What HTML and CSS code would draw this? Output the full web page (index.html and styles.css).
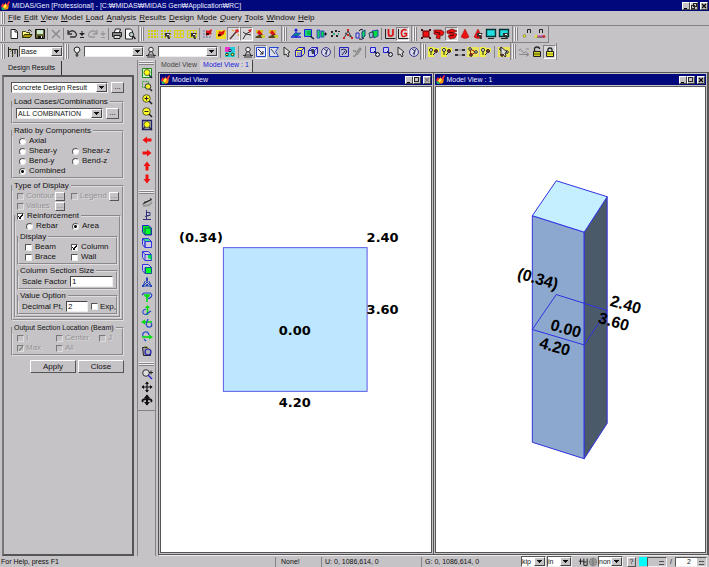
FILE: index.html
```html
<!DOCTYPE html>
<html lang="en">
<head>
<meta charset="utf-8">
<title>MIDAS/Gen</title>
<link rel="stylesheet" href="styles.css">
</head>
<body>
<svg class="defs" aria-hidden="true">
  <symbol id="logo" viewBox="0 0 9 9"><path d="M0 5l2-3 1 2 2-3 0 3 3-4 1 1-2 4-2 3H2z" fill="#f33"/><path d="M2 6l2-3 2 1-2 4z" fill="#ff3"/><path d="M5 6l3-2-1 4-3 1z" fill="#f90"/><path d="M0 6l3 1 1 2H1z" fill="#2a6"/></symbol>
  <symbol id="new" viewBox="0 0 12 12"><path d="M3 1.500h4.500l2 2v7h-6.500z" fill="#fff" stroke="#222"/><path d="M7 1.500v2.500h2.500" fill="none" stroke="#222"/></symbol>
  <symbol id="open" viewBox="0 0 12 12"><path d="M1.500 9.500v-6h3l1 1h3v2" fill="#ff8" stroke="#440"/><path d="M1.500 9.500l2-3h7.500l-2 3z" fill="#a90" stroke="#330"/><path d="M7 2.500q2-2 3.500 1" fill="none" stroke="#222"/></symbol>
  <symbol id="save" viewBox="0 0 12 12"><path d="M1.500 1.500h9v9h-9z" fill="#663" stroke="#111"/><path d="M3 2h6v4H3z" fill="#cec"/><path d="M4 8h5v3H4z" fill="#111"/><path d="M7 8h1v2H7z" fill="#eee"/></symbol>
  <symbol id="cut" viewBox="0 0 12 12"><path d="M2 2l8 8M10 2l-8 8" stroke="#888" stroke-width="1.300"/></symbol>
  <symbol id="undo" viewBox="0 0 12 12"><path d="M2 2v4h4M2 5q4-4 7-1t0 5H4" fill="none" stroke="#333" stroke-width="1.300"/></symbol>
  <symbol id="redo" viewBox="0 0 12 12"><path d="M10 2v4H6M10 5q-4-4-7-1t0 5h5" fill="none" stroke="#999" stroke-width="1.300"/></symbol>
  <symbol id="drop" viewBox="0 0 6 12"><path d="M3 3v3M1 9.500h4" stroke="currentColor"/><path d="M0 5h6l-3 3z" fill="currentColor"/></symbol>
  <symbol id="print" viewBox="0 0 12 12"><path d="M3.500 4l1-3h5l-1 3" fill="#fff" stroke="#222"/><path d="M1.500 4.500h9v4h-9z" fill="#888" stroke="#222"/><path d="M3 7.500h6v3H3z" fill="#ddd" stroke="#222"/></symbol>
  <symbol id="preview" viewBox="0 0 12 12"><path d="M1.500 1h5l2 2v8h-7z" fill="#fff" stroke="#222"/><circle cx="7.500" cy="6.500" r="2.200" fill="#bcc" stroke="#222"/><path d="M9 8l2.500 3" stroke="#222" stroke-width="1.500"/></symbol>
  <symbol id="grid" viewBox="0 0 12 12"><path d="M1 2h2v2H1zM4 2h2v2H4zM7 2h2v2H7zM10 2h1v2h-1zM1 5h2v2H1zM4 5h2v2H4zM7 5h2v2H7zM10 5h1v2h-1zM1 8h2v2H1zM4 8h2v2H4zM7 8h2v2H7zM10 8h1v2h-1z" fill="#d2cc08"/></symbol>
  <symbol id="lines" viewBox="0 0 12 12"><path d="M1.500 2.500h9v7h-9zM1 6h10M4.500 2v8M7.500 2v8" fill="none" stroke="#dcd408"/></symbol>
  <symbol id="cursor" viewBox="0 0 12 12"><path d="M5 5h6l-2 2 1 4H8L7 8 5 9z" fill="#333"/><path d="M7 6h2v1H7z" fill="#fff"/></symbol>
  <symbol id="snap" viewBox="0 0 12 12"><path d="M1 2h2v2H1zM1 5h2v2H1zM1 8h2v2H1zM4 8h2v2H4zM7 8h2v2H7z" fill="#99b"/><path d="M4 2l2 1 4-2-1 4 1 1-4 1-2 1z" fill="#d11"/><path d="M4 5h3v2H4z" fill="#400"/></symbol>
  <symbol id="snapy" viewBox="0 0 12 12"><path d="M1 2h10v9H1z" fill="#ed2"/><path d="M4 3l2 1 4-2-1 4-3 2-3 1z" fill="#d11"/><path d="M3 6h3v2H3z" fill="#400"/></symbol>
  <symbol id="wand" viewBox="0 0 12 12"><path d="M2 11l6-7" stroke="#533" stroke-width="1.300"/><path d="M7 2l3-1 1 3-3 1z" fill="#d22"/><path d="M4 2l2 1M10 6l1 2" stroke="#e90"/></symbol>
  <symbol id="branch" viewBox="0 0 12 12"><path d="M2 11l3-5 5-3M2 4l3 2 5 1" fill="none" stroke="#333"/><path d="M7 2l4-1-2 4z" fill="#c22"/></symbol>
  <symbol id="pick" viewBox="0 0 12 12"><path d="M2 2h7v3H2z" fill="#db2"/><path d="M3 5l2-3 5 6-3 1z" fill="#d11"/><path d="M1 9l6-3 4 4H2z" fill="#542"/><path d="M7 7h4v3H8z" fill="#cc3"/></symbol>
  <symbol id="axis" viewBox="0 0 12 12"><path d="M6 1v9M1 9h10" stroke="#22d" stroke-width="1.300"/><path d="M2 8l3-3h6l-3 3z" fill="#088" stroke="#22d" stroke-width=".6"/><path d="M4 3l2-3 2 3z" fill="#22d"/></symbol>
  <symbol id="greenbox" viewBox="0 0 12 12"><path d="M1.500 1.500h7v7h-7z" fill="#2c8" stroke="#22d"/><path d="M4 3h4v4H4z" fill="#0b4"/><path d="M7 8l4 3" stroke="#123" stroke-width="1.500"/></symbol>
  <symbol id="move" viewBox="0 0 12 12"><path d="M1 2h3v8H1z" fill="#2c6" stroke="#22d" stroke-width=".7"/><path d="M5 3h3v6H5z" fill="#0d4" stroke="#22d" stroke-width=".7"/><path d="M8 6h3M9.500 4.500v3" stroke="#111"/></symbol>
  <symbol id="dots" viewBox="0 0 12 12"><path d="M2 3h2v2H2zM6 2h2v2H6zM9 3h2v1H9zM2 7h2v2H2zM7 7h2v2H7z" fill="#222"/><path d="M4 5h2v2H4zM9 5h1v2H9z" fill="#3a7"/></symbol>
  <symbol id="nodes" viewBox="0 0 12 12"><path d="M2 10l4-7 4 7M3 5l6 4" fill="none" stroke="#333"/><path d="M5 1h2v2H5zM1 9h2v2H1zM9 9h2v2H9zM5 6h2v2H5z" fill="#c22"/></symbol>
  <symbol id="rotate" viewBox="0 0 12 12"><path d="M1 5h3v5H1z" fill="#ccd" stroke="#22b"/><path d="M7 4l3-2v6l-3 2z" fill="#1d6" stroke="#147"/><path d="M4 3q2-3 4-1M4 11q3 1 5-1" stroke="#113" fill="none"/></symbol>
  <symbol id="mirror" viewBox="0 0 12 12"><path d="M4 3l6-1v6l-4 2z" fill="#0d4" stroke="#22b" stroke-width=".8"/><path d="M1 5l4-1v5l-3 1z" fill="#9bd" stroke="#123" stroke-width=".8"/></symbol>
  <symbol id="u" viewBox="0 0 12 12"><path d="M1.500 1v9.500h10" fill="none" stroke="#222"/><path d="M4.500 1v5q0 2 2.200 2T9 6V1" fill="none" stroke="#d11" stroke-width="1.700"/></symbol>
  <symbol id="g" viewBox="0 0 12 12"><path d="M1.500 1v9.500h10" fill="none" stroke="#222"/><path d="M9.500 2.500Q8 1 6 2T4.500 6 7 8.500t2.500-1V5.500H7" fill="none" stroke="#d11" stroke-width="1.500"/></symbol>
  <symbol id="red1" viewBox="0 0 12 12"><path d="M3 3h6v6H3z" fill="#e11" stroke="#600"/><path d="M1 1h2v2H1zM9 1h2v2H9zM1 9h2v2H1zM9 9h2v2H9z" fill="#411"/></symbol>
  <symbol id="red2" viewBox="0 0 12 12"><path d="M1 2h7l3 2-1 3-3 1v3l-4-1 1-3-3-1z" fill="#e11" stroke="#611" stroke-width=".7"/><path d="M2 4l5 1-1 2" stroke="#400" fill="none"/></symbol>
  <symbol id="red3" viewBox="0 0 12 12"><path d="M1 3l5-2 5 2-4 2 4 1-2 4-5 1-2-3 3-1-4-2z" fill="#e11" stroke="#611" stroke-width=".7"/><path d="M3 4l4 1M4 8l4-1" stroke="#400"/></symbol>
  <symbol id="cone" viewBox="0 0 12 12"><path d="M6 1l4 8q-4 3-8 0z" fill="#e11" stroke="#911" stroke-width=".5"/></symbol>
  <symbol id="screen" viewBox="0 0 12 12"><path d="M1.500 1.500h9v7h-9z" fill="#2dd" stroke="#033" stroke-width="1.400"/><path d="M3 10.500h6" stroke="#222"/></symbol>
  <symbol id="node-n" viewBox="0 0 12 12"><path d="M6.500 5V1.500h3V5" fill="none" stroke="#222"/><circle cx="3.500" cy="8" r="1.400" fill="#ee3" stroke="#663" stroke-width=".6"/></symbol>
  <symbol id="elem-n" viewBox="0 0 12 12"><path d="M5.500 5V1.500h3V5M2 9h8" fill="none" stroke="#222"/><path d="M3 8h6" stroke="#d3a"/><circle cx="2" cy="8.500" r="1.400" fill="#dd3"/><circle cx="10" cy="8.500" r="1.400" fill="#c33"/></symbol>
  <symbol id="frame" viewBox="0 0 12 12"><path d="M1.500 1v10M2 3.500h8.500V11M5.500 4v7M8 4v4" stroke="#222" fill="none"/><path d="M3 2l2 2-2 2M5 9h2" stroke="#884" fill="none"/></symbol>
  <symbol id="bulb" viewBox="0 0 12 12"><path d="M3 4q0-3 3-3t3 3L7 7H5z" fill="#eee" stroke="#222"/><path d="M6 7v4M4.500 9h3" stroke="#222"/></symbol>
  <symbol id="tri" viewBox="0 0 12 12"><circle cx="6" cy="3.500" r="2.300" fill="#eee" stroke="#333"/><path d="M5 6l-2 3h6l-2-3M1 9.500h3M8 9.500h3M2 11h8" fill="none" stroke="#333"/></symbol>
  <symbol id="colors" viewBox="0 0 12 12"><path d="M1 1h6v5H1z" fill="#e3c"/><path d="M6 1h5v5H6z" fill="#2cd"/><path d="M1 6h10v5H1z" fill="#2dc"/><circle cx="3" cy="8.500" r="1.300" fill="#ff4" stroke="#224"/><circle cx="8.500" cy="8.500" r="1.300" fill="#ff4" stroke="#224"/><circle cx="6" cy="4.500" r="1.200" fill="#f9f" stroke="#224"/></symbol>
  <symbol id="selbox" viewBox="0 0 12 12"><path d="M1.500 1.500h9v9h-9z" fill="#eef" stroke="#24c"/><path d="M3 3l5 5M8 5v3H5" fill="none" stroke="#222"/></symbol>
  <symbol id="selpoly" viewBox="0 0 12 12"><path d="M1.500 1.500h9l-3 4 3 5h-9z" fill="#dde" stroke="#24c"/><path d="M3 3l4 5" stroke="#345"/></symbol>
  <symbol id="arrow" viewBox="0 0 12 12"><path d="M3 1l6 5-2 1 1 3-1 1-2-3-2 1z" fill="#ddd" stroke="#222" stroke-width=".9"/></symbol>
  <symbol id="selcube" viewBox="0 0 12 12"><path d="M1.500 4.500h6v6h-6zM1.500 4.500l3-3h6l-3 3M10.500 1.500v6l-3 3" fill="#ee5" stroke="#22b"/><path d="M3 6h4v4H3z" fill="#99c"/></symbol>
  <symbol id="cube" viewBox="0 0 12 12"><path d="M1.500 4.500h6v6h-6zM1.500 4.500l3-3h6l-3 3M10.500 1.500v6l-3 3" fill="#cce" stroke="#22b"/><path d="M4 3h3v5H5z" fill="#345"/></symbol>
  <symbol id="ball" viewBox="0 0 12 12"><circle cx="6" cy="6" r="4.400" fill="#dde" stroke="#338"/><path d="M4 3l3 2-1 4M8 3L5 8" fill="none" stroke="#336"/></symbol>
  <symbol id="undosel" viewBox="0 0 12 12"><path d="M1.500 1.500h9v9h-9z" fill="#bbd" stroke="#22b"/><path d="M3 4q3-2 5 0t-1 4M4 9l3-4" fill="none" stroke="#224"/></symbol>
  <symbol id="pen" viewBox="0 0 12 12"><path d="M2 10q3 1 3-3L9 2l1 1-4 6M2 5h3" fill="none" stroke="#888" stroke-width="1.300"/></symbol>
  <symbol id="act" viewBox="0 0 12 12"><path d="M1.500 1.500h5v5h-5z" fill="#ccf" stroke="#22c"/><circle cx="8.500" cy="8.500" r="2" fill="#ddd" stroke="#113"/><path d="M5 5l3 3" stroke="#113"/></symbol>
  <symbol id="ynode" viewBox="0 0 12 12"><path d="M0 1h6v10H0zM5 2h6v4H5z" fill="#ee4"/><circle cx="3" cy="4" r="1.500" fill="#fff" stroke="#222"/><circle cx="8" cy="5" r="1.500" fill="#a33" stroke="#222"/><path d="M3 6v3M7 7L5 9" stroke="#222"/></symbol>
  <symbol id="pair" viewBox="0 0 12 12"><path d="M1 3h3v2H1zM8 3h3v2H8zM1 8h3v2H1zM8 8h3v2H8z" fill="#333"/><path d="M4 4h4M4 9h4" stroke="#888"/></symbol>
  <symbol id="ytri" viewBox="0 0 12 12"><path d="M0 1h12v10H0z" fill="#e9e45c"/><path d="M3 3l6 3-5 3z" fill="none" stroke="#a11"/><circle cx="3" cy="3" r="1.300" fill="#fff" stroke="#222"/><circle cx="9" cy="6" r="1.300" fill="#fff" stroke="#222"/><circle cx="4" cy="9" r="1.300" fill="#d33" stroke="#222"/></symbol>
  <symbol id="wave" viewBox="0 0 12 12"><path d="M1 5q1-4 3 0t4 0M1 8.500h10M8 6.500l3 2-3 2M8 3h3" fill="none" stroke="#888"/></symbol>
  <symbol id="unlock" viewBox="0 0 12 12"><path d="M3.500 6V3q0-2 2.500-2t2.500 2" fill="none" stroke="#222" stroke-width="1.300"/><path d="M2.500 5.500h7v5h-7z" fill="#cc2" stroke="#222"/><path d="M3 8h6" stroke="#551"/></symbol>
  <symbol id="lock" viewBox="0 0 12 12"><path d="M4 6V3.500Q4 2 6 2t2 1.500V6" fill="none" stroke="#222" stroke-width="1.300"/><path d="M2.500 5.500h7v5h-7z" fill="#ee2" stroke="#222"/><path d="M3 8h6" stroke="#882"/></symbol>
  <symbol id="zfit" viewBox="0 0 12 12"><path d="M1.500 1.500h9v9h-9z" fill="#cfc" stroke="#282"/><circle cx="6" cy="5.500" r="3" fill="#ff1" stroke="#663"/><path d="M8 8l3 3" stroke="#224" stroke-width="1.500"/></symbol>
  <symbol id="zwin" viewBox="0 0 12 12"><path d="M1.500 1.500h6v6h-6z" fill="none" stroke="#3a3" stroke-dasharray="2 1"/><circle cx="7" cy="6.500" r="2.800" fill="#ee3" stroke="#333"/><path d="M9 9l2 2" stroke="#222" stroke-width="1.500"/></symbol>
  <symbol id="zin" viewBox="0 0 12 12"><circle cx="5.500" cy="5.500" r="3.800" fill="#ff2" stroke="#553"/><path d="M8 8l3 3" stroke="#222" stroke-width="1.600"/><path d="M3.500 5.500h4M5.500 3.500v4" stroke="#222"/></symbol>
  <symbol id="zout" viewBox="0 0 12 12"><circle cx="5.500" cy="5.500" r="3.800" fill="#ff2" stroke="#553"/><path d="M8 8l3 3" stroke="#222" stroke-width="1.600"/><path d="M3.500 5.500h4" stroke="#222"/></symbol>
  <symbol id="zauto" viewBox="0 0 12 12"><path d="M1.500 1.500h9v9h-9z" fill="#bbb" stroke="#226" stroke-width="1.300"/><circle cx="6" cy="5.500" r="3" fill="#ff1" stroke="#663"/><path d="M2 10l2-2M8 8l3 3" stroke="#224" stroke-width="1.300"/></symbol>
  <symbol id="left" viewBox="0 0 12 12"><path d="M1.500 6L6 2.500V4.500h4.500v3H6v2z" fill="#f01010"/></symbol>
  <symbol id="shade" viewBox="0 0 12 12"><path d="M1 9l3-4 6-3 1 2-6 3z" fill="#333"/><path d="M4 5l5-2" stroke="#ddd"/><path d="M2 10l6-1 3-3" stroke="#999" stroke-width="2" fill="none"/></symbol>
  <symbol id="persp" viewBox="0 0 12 12"><path d="M5.500 1v9M2 10.500h8M6 3.500h3v3H6M4 7.500l4-1" fill="none" stroke="#337"/></symbol>
  <symbol id="vgreen" viewBox="0 0 12 12"><path d="M1.500 1.500h6l3 2.500v7H4l-2.500-3z" fill="#0e2" stroke="#22c"/><path d="M4 4h6v6.500H4z" fill="#0f2" stroke="#157"/></symbol>
  <symbol id="vtop" viewBox="0 0 12 12"><path d="M1.500 1.500v6l2.500 3V4.500M4 4.500h6.500v6H4z" fill="#ccd" stroke="#33d"/><path d="M1.500 1.500h6l3 3H4z" fill="#3d8" stroke="#33d"/></symbol>
  <symbol id="vside" viewBox="0 0 12 12"><path d="M1.500 1.500h6l3 3v6H4l-2.500-3z" fill="#ccd" stroke="#33d"/><path d="M7 4h3.500v6L7 8z" fill="#0d5"/><path d="M4 10.500v-6h6M2 2l2 2.500" fill="none" stroke="#33d"/></symbol>
  <symbol id="vfront" viewBox="0 0 12 12"><path d="M1.500 1.500h6l3 3H4v6l-2.500-3z" fill="#ccd" stroke="#33d"/><path d="M4.500 4.500h6v6h-6z" fill="#0f2" stroke="#159"/></symbol>
  <symbol id="iso" viewBox="0 0 12 12"><path d="M6 1v5l-4 4M6 6l4 4M4 5l-2 5h8L8 5" fill="none" stroke="#24b"/><path d="M5 2h2v3H5zM1 9h2v2H1zM9 9h2v2H9zM5 8h2v2H5z" fill="#24b"/></symbol>
  <symbol id="spin-l" viewBox="0 0 12 12"><path d="M6 11V4M3 4h6" stroke="#0d1" stroke-width="1.600"/><path d="M3.500 6L6 3l2.500 3z" fill="#0d1"/><path d="M1 4l2-2h6q3 2 1 4T7 7" fill="none" stroke="#24c" stroke-width="1.200"/></symbol>
  <symbol id="spin-r" viewBox="0 0 12 12"><path d="M6.500 11V2" stroke="#0d1" stroke-width="1.600"/><path d="M4 4l2.500-3L9 4z" fill="#0d1"/><path d="M5 5q-4 1-3 4 2 3 5 0l3-2" fill="none" stroke="#24c" stroke-width="1.200"/></symbol>
  <symbol id="spin-u" viewBox="0 0 12 12"><path d="M11 5H2" stroke="#0d1" stroke-width="1.600"/><path d="M4 2.500L0 5l4 2.500z" fill="#0d1"/><path d="M7 2L5 7q1 4 4 3t1-4" fill="none" stroke="#24c" stroke-width="1.200"/></symbol>
  <symbol id="spin-d" viewBox="0 0 12 12"><path d="M1 7h8" stroke="#0d1" stroke-width="1.600"/><path d="M8 4.500L12 7 8 9.500z" fill="#0d1"/><path d="M2 6q-1-3 2-4t4 3M3 9l2 2" fill="none" stroke="#24c" stroke-width="1.200"/></symbol>
  <symbol id="reset" viewBox="0 0 12 12"><path d="M1.500 2.500h5l3 3v5h-7z" fill="#99a" stroke="#223"/><circle cx="7" cy="7" r="3" fill="#aab" stroke="#22a" stroke-width="1.200"/><path d="M3 2q3-2 5 2" stroke="#882" fill="none"/></symbol>
  <symbol id="dynzoom" viewBox="0 0 12 12"><circle cx="5" cy="5" r="3.300" fill="#ddd" stroke="#333"/><path d="M7 7l4 4" stroke="#22c" stroke-width="1.500"/><path d="M8 4.500h4M10 2.500v4" stroke="#222"/></symbol>
  <symbol id="pan" viewBox="0 0 12 12"><path d="M6 1v10M1 6h10" stroke="#111" stroke-width="1.200"/><path d="M4 3l2-2.500L8 3zM4 9l2 2.500L8 9zM3 4L.5 6 3 8zM9 4l2.500 2L9 8z" fill="#111"/></symbol>
  <symbol id="orbit" viewBox="0 0 12 12"><path d="M6 1v10" stroke="#111" stroke-width="2"/><path d="M3 4l3-3.500L9 4zM3 8l3 3.500L9 8z" fill="#111"/><path d="M2 8q-2-3 4-3t4 3" fill="none" stroke="#111" stroke-width="1.800"/></symbol>
  <symbol id="globe" viewBox="0 0 12 12"><circle cx="6" cy="6" r="4.500" fill="#aaa" stroke="#888"/><path d="M1 6h10M6 1v10M3 3q3 2 6 0M3 9q3-2 6 0" fill="none" stroke="#777"/></symbol>
  <symbol id="fit" viewBox="0 0 12 12"><path d="M1 5h5M3 2v7M7 2v8h4V2M6 6h4" fill="none" stroke="#222" stroke-width="1.200"/></symbol>
  <symbol id="x" viewBox="0 0 6 6"><path d="M1 1l4 4M5 1L1 5" stroke="currentColor" stroke-width="1.300"/></symbol>
</svg>

<header class="titlebar">
  <svg class="logo"><use href="#logo"/></svg>
  <h1>MIDAS/Gen [Professional] - [C:₩MIDAS₩MIDAS Gen₩Application₩RC]</h1>
  <div class="winbtns"><button class="wb min" aria-label="Minimize"></button><button class="wb restore" aria-label="Restore"></button><button class="wb close" aria-label="Close"><svg><use href="#x"/></svg></button></div>
</header>

<nav class="menubar">
  <i class="grip"></i>
  <a href="#"><u>F</u>ile</a><a href="#"><u>E</u>dit</a><a href="#"><u>V</u>iew</a><a href="#"><u>M</u>odel</a><a href="#"><u>L</u>oad</a><a href="#"><u>A</u>nalysis</a><a href="#"><u>R</u>esults</a><a href="#"><u>D</u>esign</a><a href="#">M<u>o</u>de</a><a href="#"><u>Q</u>uery</a><a href="#"><u>T</u>ools</a><a href="#"><u>W</u>indow</a><a href="#"><u>H</u>elp</a>
</nav>

<div class="bars bars-main">
  <div class="band"><i class="grip"></i>
    <button class="tb" aria-label="New"><svg><use href="#new"/></svg></button><button class="tb" aria-label="Open"><svg><use href="#open"/></svg></button><button class="tb" aria-label="Save"><svg><use href="#save"/></svg></button><i class="sep"></i><button class="tb" aria-label="Cut"><svg><use href="#cut"/></svg></button><i class="sep"></i><button class="tb" aria-label="Undo"><svg><use href="#undo"/></svg></button><button class="tb slim" aria-label="Undo list"><svg><use href="#drop"/></svg></button><button class="tb" aria-label="Redo"><svg><use href="#redo"/></svg></button><button class="tb slim off" aria-label="Redo list"><svg><use href="#drop"/></svg></button><i class="sep"></i><button class="tb" aria-label="Print"><svg><use href="#print"/></svg></button><button class="tb" aria-label="Preview"><svg><use href="#preview"/></svg></button>
  </div>
  <div class="band"><i class="grip"></i>
    <button class="tb" aria-label="Point grid"><svg><use href="#grid"/></svg></button><button class="tb" aria-label="Set point grid"><svg><use href="#grid"/><use href="#cursor"/></svg></button><button class="tb" aria-label="Line grid"><svg><use href="#lines"/></svg></button><button class="tb" aria-label="Set line grid"><svg><use href="#lines"/><use href="#cursor"/></svg></button><i class="sep"></i><button class="tb" aria-label="Point snap"><svg><use href="#snap"/></svg></button><button class="tb" aria-label="Line snap"><svg><use href="#snapy"/></svg></button><button class="tb on" aria-label="Node snap"><svg><use href="#wand"/></svg></button><button class="tb on" aria-label="Element snap"><svg><use href="#branch"/></svg></button><button class="tb" aria-label="Snap all"><svg><use href="#pick"/></svg></button><button class="tb" aria-label="Snap free"><svg><use href="#pick"/></svg></button>
  </div>
  <div class="band"><i class="grip"></i>
    <button class="tb" aria-label="UCS"><svg><use href="#axis"/></svg></button><button class="tb" aria-label="Named plane"><svg><use href="#greenbox"/></svg></button><button class="tb" aria-label="Translate"><svg><use href="#move"/></svg></button><button class="tb" aria-label="Create nodes"><svg><use href="#dots"/></svg></button><button class="tb" aria-label="Create elements"><svg><use href="#nodes"/></svg></button><button class="tb" aria-label="Rotate"><svg><use href="#rotate"/></svg></button><button class="tb" aria-label="Mirror"><svg><use href="#mirror"/></svg></button><i class="sep"></i><button class="tb" aria-label="User coordinates"><svg><use href="#u"/></svg></button><button class="tb on" aria-label="Global coordinates"><svg><use href="#g"/></svg></button>
  </div>
  <div class="band"><i class="grip"></i>
    <button class="tb" aria-label="Shrink"><svg><use href="#red1"/></svg></button><button class="tb" aria-label="Perspective"><svg><use href="#red2"/></svg></button><button class="tb on" aria-label="Hidden"><svg><use href="#red3"/></svg></button><button class="tb" aria-label="Render"><svg><use href="#cone"/></svg></button><button class="tb" aria-label="Render option"><svg><use href="#cone"/><use href="#cursor"/></svg></button><button class="tb" aria-label="Display"><svg><use href="#screen"/></svg></button><button class="tb" aria-label="Display option"><svg><use href="#screen"/><use href="#cursor"/></svg></button>
  </div>
  <div class="band"><i class="grip"></i>
    <button class="tb" aria-label="Node number"><svg><use href="#node-n"/></svg></button><button class="tb" aria-label="Element number"><svg><use href="#elem-n"/></svg></button>
  </div>
</div>

<div class="bars bars-select">
  <div class="band"><i class="grip"></i>
    <button class="tb" aria-label="Stage"><svg><use href="#frame"/></svg></button><span class="combo stage"><select aria-label="Construction stage"><option>Base</option></select></span>
  </div>
  <div class="band"><i class="grip"></i>
    <button class="tb wide" aria-label="Select nodes"><svg><use href="#bulb"/></svg></button><span class="combo pick"><select aria-label="Node list"><option></option></select></span><button class="tb wide" aria-label="Select elements"><svg><use href="#tri"/></svg></button><span class="combo pick"><select aria-label="Element list"><option></option></select></span><i class="sep"></i><button class="tb" aria-label="Group"><svg><use href="#colors"/></svg></button><i class="sep"></i><button class="tb" aria-label="Select identity"><svg><use href="#tri"/></svg></button><button class="tb on" aria-label="Select window"><svg><use href="#selbox"/></svg></button><button class="tb" aria-label="Select polygon"><svg><use href="#selpoly"/></svg></button><button class="tb" aria-label="Select single"><svg><use href="#arrow"/></svg></button><button class="tb" aria-label="Select plane"><svg><use href="#selcube"/></svg></button><button class="tb" aria-label="Select volume"><svg><use href="#cube"/></svg></button><button class="tb" aria-label="Select all"><svg><use href="#ball"/></svg></button><i class="sep"></i><button class="tb" aria-label="Select previous"><svg><use href="#undosel"/></svg></button><button class="tb" aria-label="Select recent"><svg><use href="#pen"/></svg></button><i class="sep"></i><button class="tb" aria-label="Activate"><svg><use href="#act"/></svg></button><button class="tb" aria-label="Inactivate"><svg><use href="#act"/></svg></button><button class="tb" aria-label="Activate inverse"><svg><use href="#arrow"/></svg></button><button class="tb" aria-label="Activate all"><svg><use href="#ball"/></svg></button>
  </div>
  <div class="band"><i class="grip"></i>
    <button class="tb" aria-label="Query nodes"><svg><use href="#ynode"/></svg></button><button class="tb" aria-label="Query elements"><svg><use href="#ynode"/></svg></button><button class="tb" aria-label="Merge"><svg><use href="#pair"/></svg></button><button class="tb" aria-label="Free edge"><svg><use href="#ytri"/></svg></button><button class="tb" aria-label="Free face"><svg><use href="#ynode"/></svg></button><i class="sep"></i><button class="tb" aria-label="Check"><svg><use href="#ytri"/><use href="#arrow"/></svg></button>
  </div>
  <div class="band"><i class="grip"></i>
    <button class="tb" aria-label="Analysis"><svg><use href="#wave"/></svg></button><button class="tb" aria-label="Preprocessing"><svg><use href="#unlock"/></svg></button><button class="tb on" aria-label="Postprocessing"><svg><use href="#lock"/></svg></button>
  </div>
</div>

<main class="work">
  <aside class="side">
    <div class="side-tab">Design Results</div>
    <form class="panel">
      <div class="row first"><span class="combo grow"><select aria-label="Result type"><option>Concrete Design Result</option></select></span><button type="button" class="btn more">...</button></div>
      <fieldset class="lc"><legend>Load Cases/Combinations</legend>
        <div class="row"><span class="combo grow"><select aria-label="Load combination"><option>ALL COMBINATION</option></select></span><button type="button" class="btn more">...</button></div>
      </fieldset>
      <fieldset class="ratio"><legend>Ratio by Components</legend>
        <label><input type="radio" name="r">Axial</label><span></span>
        <label><input type="radio" name="r">Shear-y</label><label><input type="radio" name="r">Shear-z</label>
        <label><input type="radio" name="r">Bend-y</label><label><input type="radio" name="r">Bend-z</label>
        <label><input type="radio" name="r" checked>Combined</label>
      </fieldset>
      <fieldset class="type"><legend>Type of Display</legend>
        <div class="opts"><label class="dis"><input type="checkbox" disabled>Contour</label><button type="button" class="btn tiny" disabled>...</button><label class="dis"><input type="checkbox" disabled>Legend</label><button type="button" class="btn tiny" disabled>...</button>
        <label class="dis"><input type="checkbox" disabled>Values</label><button type="button" class="btn tiny" disabled>...</button></div>
        <fieldset class="reinf"><legend><label><input type="checkbox" checked>Reinforcement</label></legend>
          <div class="two area"><label><input type="radio" name="a">Rebar</label><label><input type="radio" name="a" checked>Area</label></div>
          <fieldset class="inner"><legend>Display</legend>
            <div class="two"><label><input type="checkbox">Beam</label><label><input type="checkbox" checked>Column</label><label><input type="checkbox">Brace</label><label><input type="checkbox">Wall</label></div>
          </fieldset>
          <fieldset class="inner"><legend>Column Section Size</legend>
            <div class="row"><label for="sf">Scale Factor</label><input id="sf" class="txt grow" type="text" value="1"></div>
          </fieldset>
          <fieldset class="inner"><legend>Value Option</legend>
            <div class="row"><label for="dp">Decimal Pt,</label><input id="dp" class="txt dp" type="text" value="2"><label><input type="checkbox">Exp,</label></div>
          </fieldset>
        </fieldset>
      </fieldset>
      <fieldset class="out"><legend>Output Section Location (Beam)</legend>
        <label class="dis"><input type="checkbox" disabled>I</label><label class="dis"><input type="checkbox" disabled>Center</label><label class="dis"><input type="checkbox" disabled>J</label>
        <label class="dis"><input type="checkbox" disabled checked>Max</label><label class="dis"><input type="checkbox" disabled>All</label>
      </fieldset>
      <div class="actions"><button type="button" class="btn">Apply</button><button type="button" class="btn">Close</button></div>
    </form>
  </aside>

  <div class="vbar">
    <i class="hgrip"></i>
    <button class="tb" aria-label="Zoom fit"><svg><use href="#zfit"/></svg></button><button class="tb" aria-label="Zoom window"><svg><use href="#zwin"/></svg></button><button class="tb" aria-label="Zoom in"><svg><use href="#zin"/></svg></button><button class="tb" aria-label="Zoom out"><svg><use href="#zout"/></svg></button><button class="tb" aria-label="Auto fit"><svg><use href="#zauto"/></svg></button><i class="vsep"></i><button class="tb" aria-label="Pan left"><svg><use href="#left"/></svg></button><button class="tb r180" aria-label="Pan right"><svg><use href="#left"/></svg></button><button class="tb r90" aria-label="Pan up"><svg><use href="#left"/></svg></button><button class="tb r270" aria-label="Pan down"><svg><use href="#left"/></svg></button>
    <i class="hgrip"></i>
    <button class="tb" aria-label="Shade"><svg><use href="#shade"/></svg></button><button class="tb" aria-label="Perspective"><svg><use href="#persp"/></svg></button><i class="vsep"></i><button class="tb" aria-label="Iso view"><svg><use href="#vgreen"/></svg></button><button class="tb" aria-label="Top view"><svg><use href="#vtop"/></svg></button><button class="tb" aria-label="Right view"><svg><use href="#vside"/></svg></button><button class="tb" aria-label="Front view"><svg><use href="#vfront"/></svg></button><button class="tb" aria-label="Angle view"><svg><use href="#iso"/></svg></button><i class="vsep"></i><button class="tb" aria-label="Rotate left"><svg><use href="#spin-l"/></svg></button><button class="tb" aria-label="Rotate right"><svg><use href="#spin-r"/></svg></button><button class="tb" aria-label="Rotate up"><svg><use href="#spin-u"/></svg></button><button class="tb" aria-label="Rotate down"><svg><use href="#spin-d"/></svg></button><i class="vsep"></i><button class="tb" aria-label="Previous view"><svg><use href="#reset"/></svg></button>
    <i class="hgrip"></i>
    <button class="tb" aria-label="Dynamic zoom"><svg><use href="#dynzoom"/></svg></button><button class="tb" aria-label="Dynamic pan"><svg><use href="#pan"/></svg></button><button class="tb" aria-label="Dynamic rotate"><svg><use href="#orbit"/></svg></button>
    <i class="vend"></i>
  </div>

  <section class="mdi">
    <div class="tabs"><a href="#">Model View</a><a href="#" class="active">Model View : 1</a></div>
    <div class="windows">
      <article class="win">
        <header><svg class="logo"><use href="#logo"/></svg><h2>Model View</h2><div class="winbtns"><button class="wb min" aria-label="Minimize"></button><button class="wb max" aria-label="Maximize"></button><button class="wb close dim" aria-label="Close"><svg><use href="#x"/></svg></button></div></header>
        <div class="canvas"><svg viewBox="161 87 270 465">
          <rect x="223.500" y="247.500" width="144" height="144" fill="#bde7ff" stroke="#5a5ae8"/>
          <g class="plan"><text x="179" y="242">(0.34)</text><text x="367" y="242">2.40</text><text x="367" y="314">3.60</text><text x="279" y="335">0.00</text><text x="279" y="407">4.20</text></g>
        </svg></div>
      </article>
      <article class="win">
        <header><svg class="logo"><use href="#logo"/></svg><h2>Model View : 1</h2><div class="winbtns"><button class="wb min" aria-label="Minimize"></button><button class="wb max" aria-label="Maximize"></button><button class="wb close" aria-label="Close"><svg><use href="#x"/></svg></button></div></header>
        <div class="canvas"><svg viewBox="436 87 270 465">
          <g stroke="#3030e0" stroke-linejoin="round">
            <path d="M532.500 215.500l52 16.500v227l-52-16.500z" fill="#8ca8cf"/>
            <path d="M584.500 232l23-35.500v227l-23 35.500z" fill="#4b5a69"/>
            <path d="M556.500 180.500l51 16-23 35.500-52-16.500z" fill="#c5efff"/>
            <path d="M556.500 294.500l51 16-23 34.500-52-15.500z" fill="none"/>
          </g>
          <g class="iso"><text transform="translate(538 279) rotate(16)" y="5">(0.34)</text><text transform="translate(626 305) rotate(16)" y="5">2.40</text><text transform="translate(614 322) rotate(16)" y="5">3.60</text><text transform="translate(566 329) rotate(16)" y="5">0.00</text><text transform="translate(555 347) rotate(16)" y="5">4.20</text></g>
        </svg></div>
      </article>
    </div>
  </section>
</main>

<footer class="status">
  <span class="help">For Help, press F1</span><span class="pane none">None!</span><span class="pane coord">U: 0, 1086,614, 0</span><span class="pane coord">G: 0, 1086,614, 0</span>
  <span class="combo unit"><select aria-label="Force unit"><option>kip</option></select></span><span class="combo unit"><select aria-label="Length unit"><option>in</option></select></span>
  <svg class="st-ic gap"><use href="#fit"/></svg><svg class="st-ic"><use href="#globe"/></svg>
  <span class="combo unit"><select aria-label="Filter"><option>non</option></select></span>
  <button class="btn q">?</button><i class="swatch"></i><span class="spinbox"></span><span class="slash">/</span><span class="spinbox num">2</span>
</footer>
</body>
</html>
```
FILE: styles.css
```css
* { box-sizing: border-box; }
:root {
  --face: #c6c3c6;
  --dark: #848284;
  --navy: #00087c;
}
html, body { margin: 0; }
body {
  min-height: 100vh;
  display: flex;
  flex-direction: column;
  background: var(--face);
  color: #111;
  font: 8px/10px "Liberation Sans", "Noto Sans CJK KR", sans-serif;
  overflow: hidden;
}
button, input, select { font: inherit; color: inherit; margin: 0; padding: 0; border-radius: 0; }
button { border: 0; background: none; }
h1, h2 { margin: 0; font: inherit; flex: 1; white-space: nowrap; }
a { color: inherit; text-decoration: none; }
.defs { display: none; }

.titlebar, .win header {
  display: flex;
  align-items: center;
  gap: 2px;
  height: 11px;
  padding: 0 1px;
  background: var(--navy);
  color: #eef;
  font-size: 7px;
}
.logo { width: 9px; height: 9px; }
.winbtns { display: flex; }
.wb {
  position: relative;
  width: 8px;
  height: 8px;
  background: var(--face);
  border: 1px solid;
  border-color: #fff #444 #444 #fff;
  color: #000;
}
.wb svg { display: block; width: 6px; height: 6px; }
.wb.close { margin-left: 2px; }
.wb.dim { color: #777; }
.wb.min::after { content: ""; position: absolute; left: 1px; bottom: 0; width: 3px; height: 1px; background: #000; }
.wb.max::after, .wb.restore::after { content: ""; position: absolute; inset: 0 1px 1px 0; border: 1px solid #222; }
.wb.restore::after { inset: 2px 2px 0 0; }
.wb.restore::before { content: ""; position: absolute; inset: 0 0 2px 2px; border: 1px solid #222; }

.menubar {
  display: flex;
  align-items: center;
  gap: 3px;
  height: 15px;
  border-bottom: 1px solid var(--dark);
}
.grip {
  flex: none;
  width: 5px;
  align-self: stretch;
  margin: 1px 1px 1px 0;
  background: linear-gradient(90deg, transparent 1px, #eee 1px 2px, var(--dark) 2px 3px, #eee 3px 4px, var(--dark) 4px);
}
.menubar .grip { margin-right: 0; }

.bars { display: flex; height: 17px; }
.band {
  display: flex;
  align-items: center;
  border-right: 1px solid var(--dark);
  border-bottom: 1px solid var(--dark);
}
.bars-main .band { padding-right: 2px; }
.bars-main .grip { margin-right: 2px; }
.bars-select .band { border-bottom: 0; }
.tb { flex: none; display: grid; place-items: center; width: 13px; height: 14px; }
.tb svg { width: 12px; height: 12px; }
.tb.slim { width: 8px; color: #222; }
.tb.slim svg { width: 6px; }
.tb.off { color: #999; }
.tb.wide { width: 14px; }
.tb.on { background: #d9d7d9; border: 1px solid; border-color: var(--dark) #fff #fff var(--dark); }
.sep { flex: none; width: 1px; height: 12px; margin: 0 1px; background: var(--dark); }
.bars-select .sep { margin: 0 2px; }

.combo {
  position: relative;
  display: flex;
  height: 11px;
  background: #fff;
  border: 1px solid;
  border-color: #555 #eee #eee #555;
  font-size: 7px;
}
.combo select { flex: 1; min-width: 0; appearance: none; border: 0; background: none; padding: 0 9px 0 1px; line-height: 9px; }
.combo::after {
  content: "";
  position: absolute;
  top: 0;
  right: 0;
  bottom: 0;
  width: 9px;
  border: 1px solid;
  border-color: #fff #444 #444 #fff;
  background: linear-gradient(#111, #111) center 2px / 5px 1px no-repeat, linear-gradient(#111, #111) center 3px / 3px 1px no-repeat, linear-gradient(#111, #111) center 4px / 1px 1px no-repeat, var(--face);
  pointer-events: none;
}
.stage { width: 44px; }
.pick { width: 60px; }

.work { flex: 1; display: flex; min-height: 0; }
.side { width: 134px; display: flex; flex-direction: column; padding: 1px 0 0 2px; }
.side-tab {
  align-self: flex-start;
  height: 14px;
  padding: 2px 6px;
  font-size: 7px;
  border-right: 1px solid #333;
}
.panel {
  flex: 1;
  padding: 5px 8px 0 7px;
  border: 2px solid;
  border-color: #555 #555 #555 #777;
}
.row { display: flex; align-items: center; }
.grow { flex: 1; min-width: 0; }
.btn {
  background: var(--face);
  border: 1px solid;
  border-color: #fff #555 #555 #fff;
  line-height: 8px;
}
.more { width: 13px; height: 11px; margin-left: 3px; padding-bottom: 2px; }
.tiny { width: 10px; height: 9px; line-height: 6px; }
.btn:disabled { color: #777; }
fieldset {
  --in: 4px;
  min-width: 0;
  margin: 2px 0 0;
  padding: 0 var(--in) 1px;
  border: 2px groove #dedcde;
}
legend { height: 10px; margin-left: calc(-1px - var(--in)); padding: 0 2px; white-space: nowrap; }
.lc { --in: 3px; margin-top: 4px; padding-top: 1px; padding-bottom: 3px; }
.ratio, .two { display: grid; grid-template-columns: 53px 1fr; }
.ratio { --in: 6px; }
.two { grid-template-columns: 46px 1fr; }
label { display: flex; align-items: center; gap: 3px; height: 10px; white-space: nowrap; }
input[type=radio], input[type=checkbox] {
  flex: none;
  appearance: none;
  width: 7px;
  height: 7px;
  background: #fff;
  border: 1px solid;
  border-color: #555 #eee #eee #555;
}
input[type=radio] { border-radius: 50%; }
input[type=radio]:checked { background: radial-gradient(circle, #111 1px, #fff 2px); }
input[type=checkbox]:checked { background: linear-gradient(45deg, transparent 35%, #111 35% 65%, transparent 65%) 0 2px / 3px 3px no-repeat, linear-gradient(-45deg, transparent 40%, #111 40% 65%, transparent 65%) right 0 / 4px 5px no-repeat, #fff; }
input:disabled { background: var(--face); border-color: #777 #ddd #ddd #777; }
input[type=checkbox]:checked:disabled { background: linear-gradient(-45deg, transparent 40%, #888 40% 65%, transparent 65%) center / 4px 5px no-repeat; }
.dis { gap: 2px; color: #949294; text-shadow: 1px 1px #dcdadc; }
.type { --in: 1px; }
.opts { display: grid; grid-template-columns: 38px 16px 38px 1fr; align-items: center; padding-left: 3px; }
.reinf { --in: 1px; margin-top: 0; }
.area { padding-left: 9px; }
.inner { --in: 3px; margin-top: 1px; }
.inner .two { padding-left: 3px; }
.txt { height: 11px; border: 1px solid; border-color: #444 #eee #eee #444; background: #fff; padding: 0 1px; min-width: 0; }
.inner .row { gap: 3px; }
.inner .row label { gap: 2px; }
.dp { flex: none; width: 22px; }
.out { display: grid; grid-template-columns: 39px 43px 1fr; }
.out legend { font-size: 7px; }
.actions { display: flex; justify-content: flex-end; gap: 2px; margin-top: 4px; }
.actions .btn { width: 46px; height: 13px; }

.vbar {
  width: 19px;
  margin-left: 3px;
  border-left: 1px solid var(--dark);
  border-right: 1px solid var(--dark);
  display: flex;
  flex-direction: column;
  align-items: center;
}
.vbar .tb { height: 13px; }
.hgrip {
  flex: none;
  align-self: stretch;
  height: 5px;
  margin: 1px 1px 0;
  background: linear-gradient(#eee 1px, var(--dark) 1px 2px, #eee 2px 3px, var(--dark) 3px 4px, transparent 4px);
}
.tb + .hgrip { margin-top: 5px; }
.vsep { flex: none; height: 2px; }
.vend { align-self: stretch; height: 5px; border-bottom: 1px solid var(--dark); }
.r90 svg { transform: rotate(90deg); }
.r180 svg { transform: rotate(180deg); }
.r270 svg { transform: rotate(270deg); }

.mdi { flex: 1; min-width: 0; display: flex; flex-direction: column; padding-left: 2px; }
.tabs { display: flex; height: 12px; color: #444; font-size: 7px; }
.tabs a { padding: 0 3px; }
.tabs .active { color: #22d; background: #d4d1d4; border-right: 1px solid #444; }
.windows {
  flex: 1;
  display: flex;
  border: 1px solid;
  border-color: #555 #555 #eee #555;
}
.win {
  flex: 1;
  min-width: 0;
  display: flex;
  flex-direction: column;
  padding: 1px;
  border-right: 1px solid #555;
  border-bottom: 1px solid #555;
}
.canvas { flex: 1; min-height: 0; margin-top: 1px; border: 1px solid #555; background: #fff; position: relative; }
.canvas svg { position: absolute; inset: 0; width: 100%; height: 100%; }
.plan { font: bold 13px "DejaVu Sans", sans-serif; }
.iso { font: bold 16px "Liberation Sans", sans-serif; text-anchor: middle; }

.status { display: flex; align-items: center; height: 11px; padding-right: 2px; font-size: 7px; }
.help { flex: 1; padding-left: 1px; }
.pane { border-left: 1px solid var(--dark); padding-left: 3px; white-space: nowrap; }
.none { width: 46px; padding-left: 5px; }
.coord { width: 100px; }
.unit { width: 25px; margin-right: 1px; }
.combo.unit select { padding-left: 0; }
.st-ic { width: 10px; height: 10px; }
.gap { margin-left: 5px; }
.q { width: 9px; height: 10px; margin: 0 3px; }
.swatch { width: 8px; height: 9px; background: #0ff; }
.spinbox { position: relative; width: 20px; height: 10px; border: 1px solid; border-color: #555 #eee #eee #555; }
.spinbox::after { content: ""; position: absolute; top: 0; right: 0; bottom: 0; width: 9px; background: linear-gradient(#555, #555) center 3px / 5px 1px no-repeat, linear-gradient(#555, #555) center 6px / 5px 1px no-repeat, var(--face); }
.num { width: 32px; padding-left: 11px; line-height: 8px; background: #fff; }
.slash { padding: 0 3px; }
```
